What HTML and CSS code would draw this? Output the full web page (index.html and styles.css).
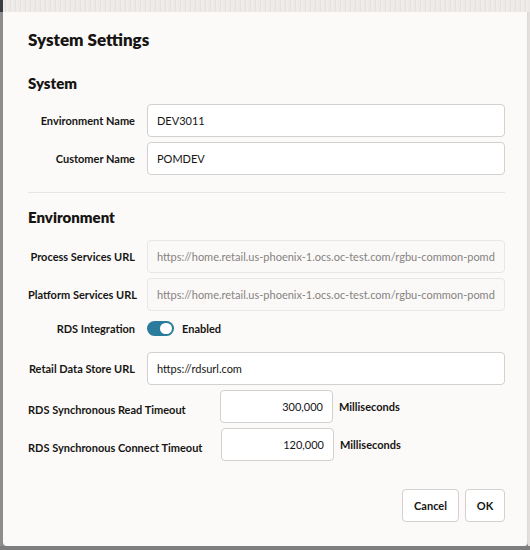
FILE: index.html
```html
<!DOCTYPE html>
<html lang="en">
<head>
<meta charset="utf-8">
<title>System Settings</title>
<link rel="stylesheet" href="styles.css">
</head>
<body>
<div class="screen">
  <div class="topband"><div class="topband-left"></div><div class="topband-fill"></div></div>
  <div class="main">
    <div class="leftstrip"></div>
    <div class="dialog">
      <h1 class="title">System Settings</h1>

      <h2 class="section">System</h2>
      <div class="rows rows-system">
        <div class="row">
          <label class="label">Environment Name</label>
          <input class="field" type="text" value="DEV3011">
        </div>
        <div class="row">
          <label class="label">Customer Name</label>
          <input class="field" type="text" value="POMDEV">
        </div>
      </div>

      <div class="divider"></div>

      <h2 class="section">Environment</h2>
      <div class="rows rows-env">
        <div class="row">
          <label class="label">Process Services URL</label>
          <input class="field field-ro" type="text" readonly value="https://home.retail.us-phoenix-1.ocs.oc-test.com/rgbu-common-pomdev3011-ps">
        </div>
        <div class="row">
          <label class="label">Platform Services URL</label>
          <input class="field field-ro" type="text" readonly value="https://home.retail.us-phoenix-1.ocs.oc-test.com/rgbu-common-pomdev3011-platform">
        </div>
        <div class="row row-toggle">
          <label class="label">RDS Integration</label>
          <div class="toggle-wrap">
            <span class="toggle"><span class="knob"></span></span>
            <span class="toggle-text">Enabled</span>
          </div>
        </div>
        <div class="row">
          <label class="label">Retail Data Store URL</label>
          <input class="field" type="text" value="https://rdsurl.com">
        </div>
        <div class="row row-timeout">
          <label class="label-wide">RDS Synchronous Read Timeout</label>
          <input class="field field-num" type="text" value="300,000">
          <span class="unit">Milliseconds</span>
        </div>
        <div class="row row-timeout row-timeout-2">
          <label class="label-wide">RDS Synchronous Connect Timeout</label>
          <input class="field field-num" type="text" value="120,000">
          <span class="unit">Milliseconds</span>
        </div>
      </div>

      <div class="actions">
        <button class="btn btn-cancel" type="button">Cancel</button>
        <button class="btn btn-ok" type="button">OK</button>
      </div>
    </div>
    <div class="rightstrip"></div>
  </div>
  <div class="bottomstrip"></div>
</div>
</body>
</html>
```

FILE: styles.css
```css
* { box-sizing: border-box; }

html, body {
  margin: 0;
  padding: 0;
}

body {
  width: 530px;
  height: 550px;
  overflow: hidden;
  background: #8a8a8a;
  font-family: Lato, "Open Sans", sans-serif;
  color: #161513;
}

.screen {
  width: 530px;
  height: 550px;
  display: flex;
  flex-direction: column;
}

.topband {
  height: 12px;
  display: flex;
  flex: none;
}

.topband-left {
  width: 3px;
  background: #3a3d42;
}

.topband-fill {
  flex: 1;
  background: repeating-linear-gradient(90deg, #ece9e7 0 2px, #e4e1df 2px 3px, #efecea 3px 5px);
}

.main {
  height: 534px;
  display: flex;
  flex: none;
}

.leftstrip {
  width: 3px;
  background: #8d8d8d;
}

.rightstrip {
  width: 2px;
  background: #e2dfdd;
}

.bottomstrip {
  flex: 1;
  background: #7e7e7e;
}

.dialog {
  width: 525px;
  background: #fcfaf9;
  border-right: 1px solid #dcd9d7;
  border-radius: 0 0 4px 4px;
  padding: 18px 22px 0 25px;
  display: flex;
  flex-direction: column;
}

.title {
  margin: 0;
  font-size: 17px;
  line-height: 20px;
  font-weight: 800;
}

.section {
  margin: 0;
  font-size: 15px;
  line-height: 18px;
  font-weight: 800;
}

.title + .section {
  margin-top: 24px;
}

.rows {
  display: flex;
  flex-direction: column;
  gap: 5px;
}

.rows-system {
  margin-top: 12px;
}

.rows-env {
  margin-top: 14px;
}

.row {
  display: flex;
  align-items: center;
  gap: 12px;
}

.label {
  width: 107px;
  flex: none;
  text-align: right;
  font-size: 11px;
  font-weight: 700;
  white-space: nowrap;
}

.field {
  flex: 1;
  min-width: 0;
  height: 33px;
  border: 1px solid #d3d0ce;
  border-radius: 4px;
  background: #ffffff;
  padding: 0 9px;
  font-family: Lato, "Open Sans", sans-serif;
  font-size: 11px;
  color: #161513;
  outline: none;
}

.field-ro {
  background: #fbf9f8;
  border-color: #e9e6e4;
  color: #858280;
}

.divider {
  height: 1px;
  background: #e8e5e3;
  margin: 17px 0 15px;
}

.row-toggle {
  height: 25px;
  margin-bottom: 6px;
}

.toggle-wrap {
  display: flex;
  align-items: center;
  gap: 8px;
}

.toggle {
  width: 27px;
  height: 15px;
  border-radius: 8px;
  background: #2a7c9d;
  display: flex;
  align-items: center;
  justify-content: flex-end;
  padding: 0 2px;
}

.knob {
  width: 12px;
  height: 11px;
  border-radius: 6px;
  background: #ffffff;
}

.toggle-text {
  font-size: 11px;
  font-weight: 700;
}

.row-timeout {
  gap: 0;
}

.label-wide {
  width: 192px;
  flex: none;
  font-size: 11px;
  font-weight: 700;
  white-space: nowrap;
  padding-top: 6px;
}

.row-timeout-2 .label-wide {
  width: 193px;
}

.field-num {
  flex: none;
  width: 113px;
  text-align: right;
}

.unit {
  margin-left: 6px;
  font-size: 11px;
  font-weight: 700;
}

.actions {
  margin-top: 28px;
  display: flex;
  justify-content: flex-end;
  gap: 6px;
}

.btn {
  height: 33px;
  border: 1px solid #d3d0ce;
  border-radius: 4px;
  background: #ffffff;
  font-family: Lato, "Open Sans", sans-serif;
  font-size: 11px;
  font-weight: 700;
  color: #161513;
  padding: 0;
}

.btn-cancel {
  width: 57px;
}

.btn-ok {
  width: 40px;
}
```
